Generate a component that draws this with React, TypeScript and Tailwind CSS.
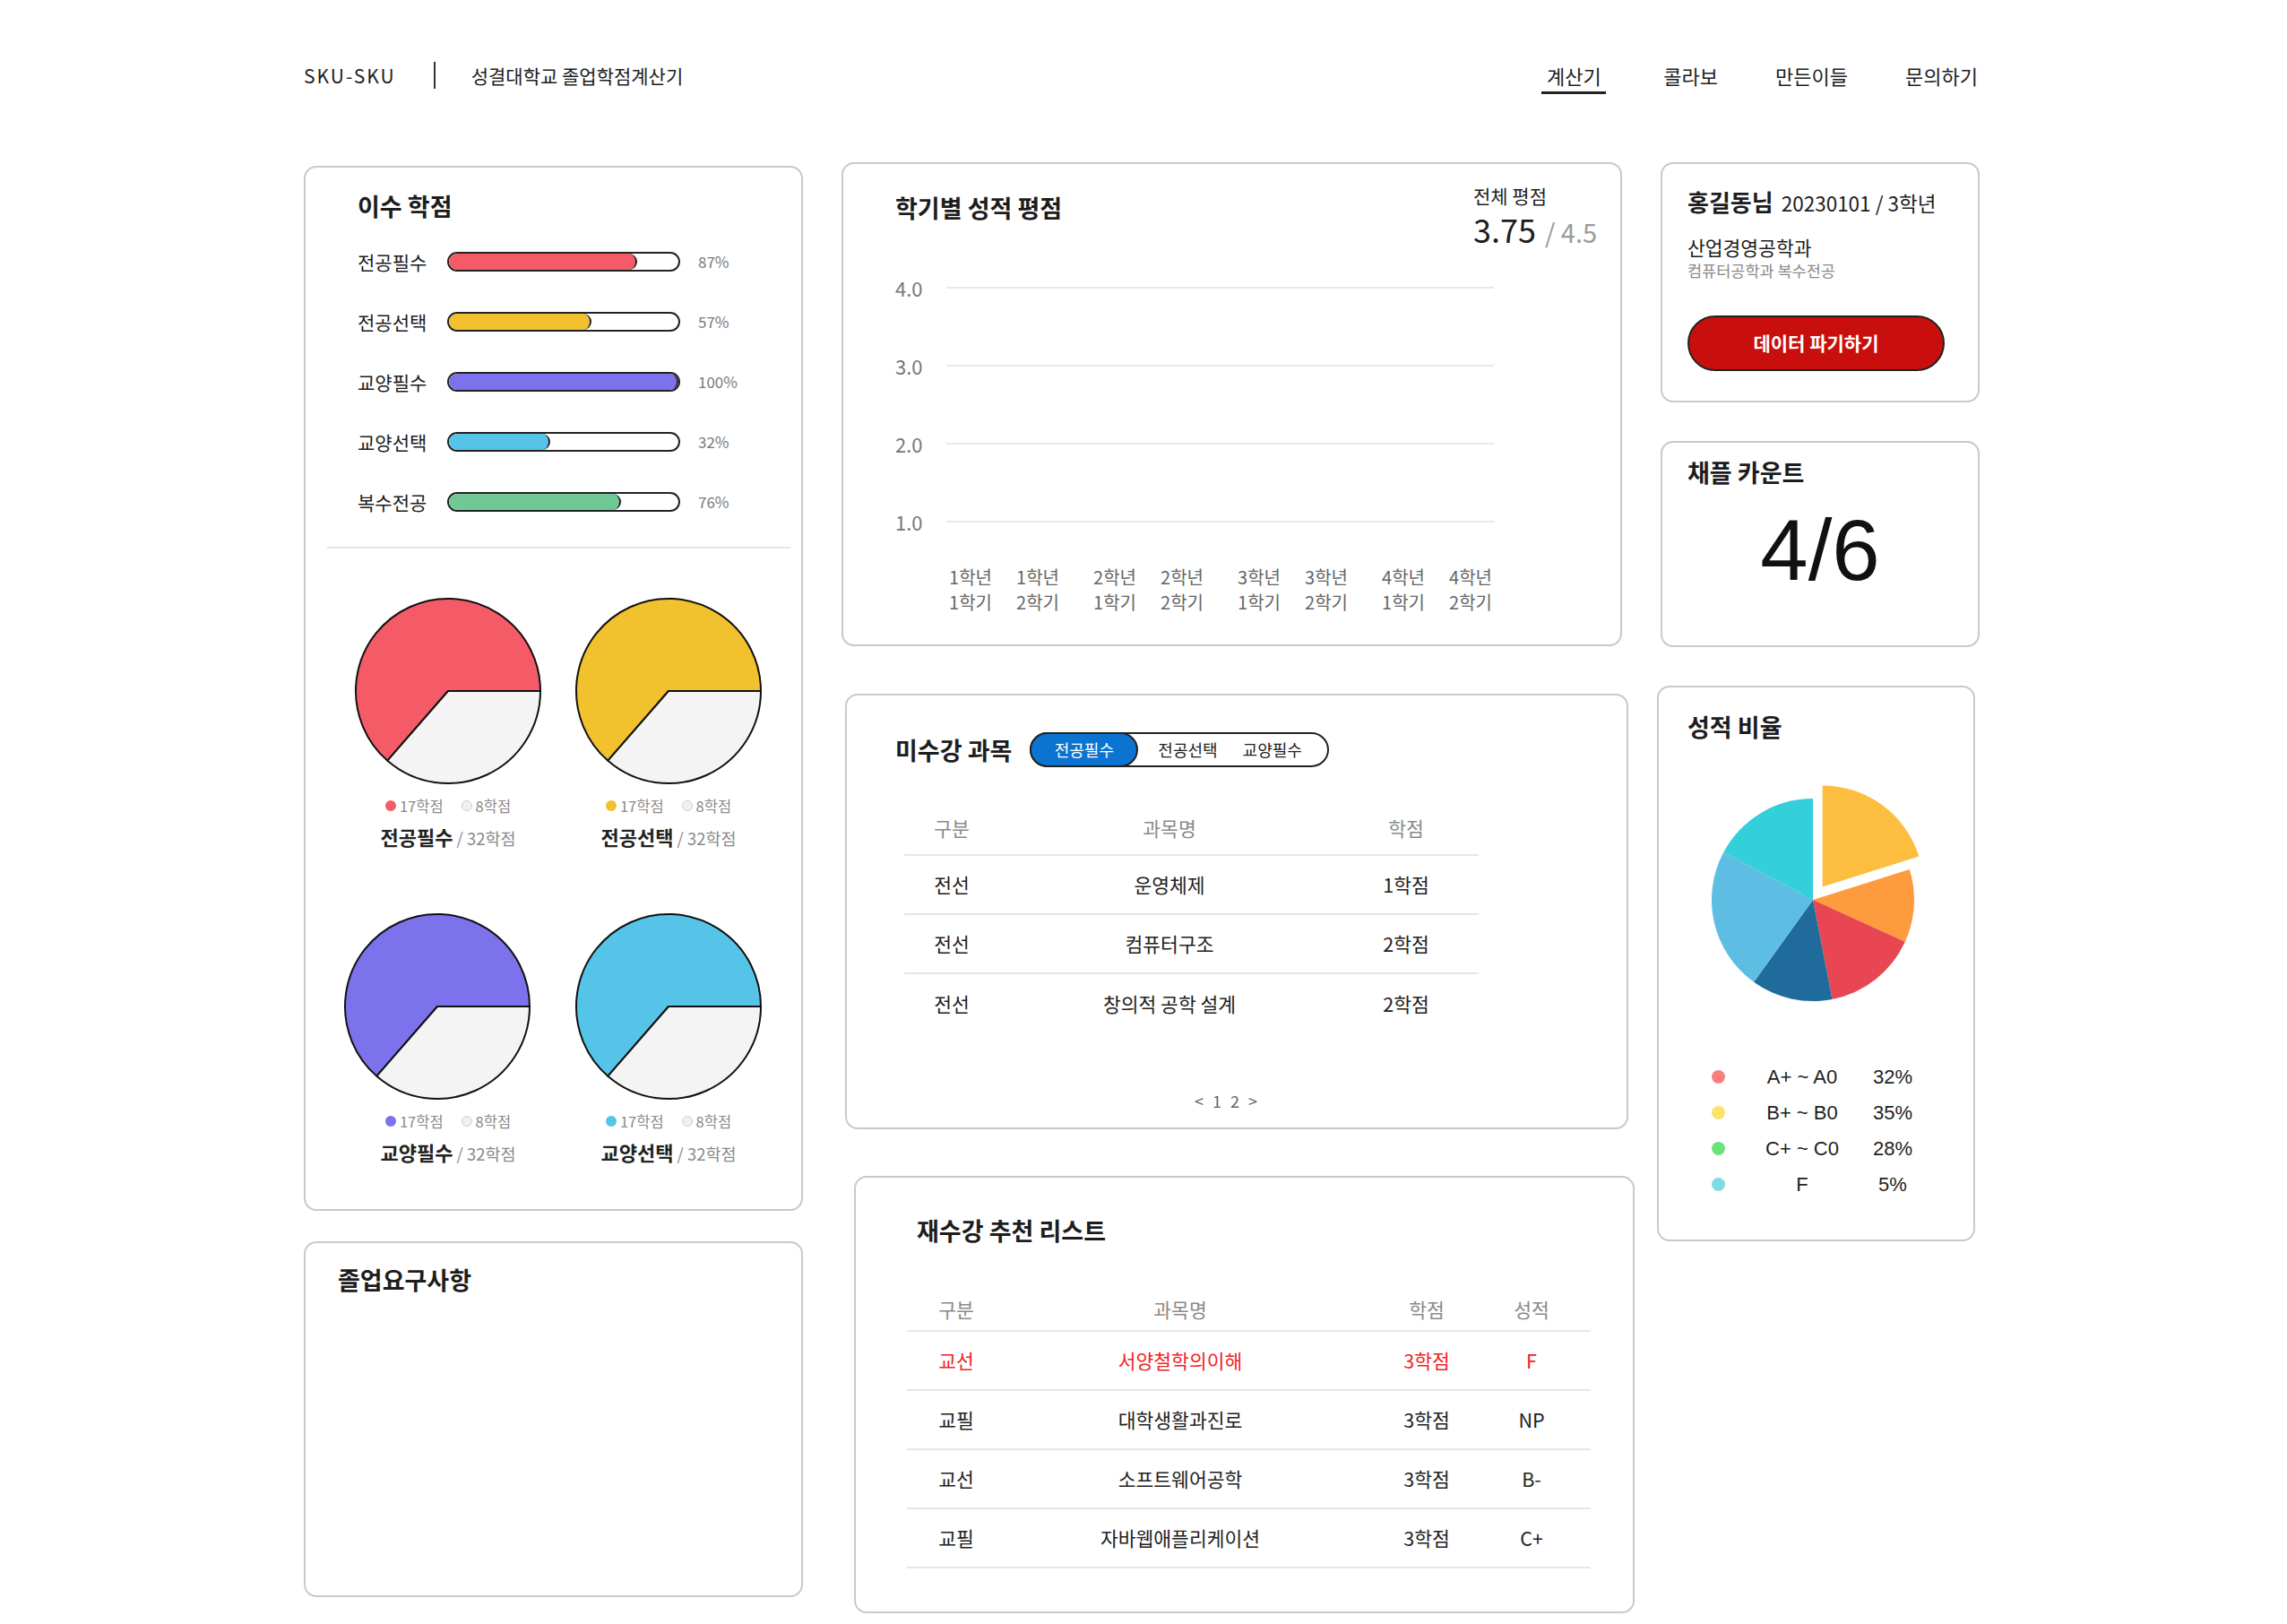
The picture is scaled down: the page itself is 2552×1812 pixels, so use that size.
import React from "react";

const bars = [
  { label: "전공필수", pct: "87%", w: 82, fill: "bg-[#F45B67]" },
  { label: "전공선택", pct: "57%", w: 62, fill: "bg-[#F2C12E]" },
  { label: "교양필수", pct: "100%", w: 100, fill: "bg-[#7B72EC]" },
  { label: "교양선택", pct: "32%", w: 44, fill: "bg-[#56C4E8]" },
  { label: "복수전공", pct: "76%", w: 75, fill: "bg-[#70C995]" },
];

function MiniPie({ color, className }: { color: string; className?: string }) {
  return (
    <svg width="210" height="210" viewBox="0 0 210 210" className={className}>
      <path
        d="M105,105 L37.4,182.7 A103,103 0 1,1 208,105 Z"
        fill={color}
        stroke="#111"
        strokeWidth="2"
        strokeLinejoin="round"
      />
      <path
        d="M105,105 L208,105 A103,103 0 0,1 37.4,182.7 Z"
        fill="#F4F4F4"
        stroke="#111"
        strokeWidth="2"
        strokeLinejoin="round"
      />
    </svg>
  );
}

function PieBlock({
  color,
  dot,
  name,
  pieClass,
}: {
  color: string;
  dot: string;
  name: string;
  pieClass?: string;
}) {
  return (
    <div className="flex w-[210px] flex-col items-center">
      <MiniPie color={color} className={pieClass} />
      <div className="mt-[12px] flex h-[22px] items-center whitespace-nowrap text-[16.5px] leading-[22px] text-[#8a8a8a]">
        <span className={`h-[12px] w-[12px] rounded-full ${dot}`} />
        <span className="ml-[4px]">17학점</span>
        <span className="ml-[20px] h-[12px] w-[12px] rounded-full border border-[#cfcfcf] bg-[#f0f0f0]" />
        <span className="ml-[4px]">8학점</span>
      </div>
      <div className="mt-[9px] whitespace-nowrap leading-[28px]">
        <span className="text-[22px] font-semibold text-[#222]">{name}</span>
        <span className="text-[18.5px] text-[#8a8a8a]"> / 32학점</span>
      </div>
    </div>
  );
}

function arcPath(cx: number, cy: number, r: number, a0: number, a1: number) {
  const rad = (d: number) => (d * Math.PI) / 180;
  const x0 = cx + r * Math.cos(rad(a0));
  const y0 = cy + r * Math.sin(rad(a0));
  const x1 = cx + r * Math.cos(rad(a1));
  const y1 = cy + r * Math.sin(rad(a1));
  const large = a1 - a0 > 180 ? 1 : 0;
  return `M${cx},${cy} L${x0.toFixed(2)},${y0.toFixed(2)} A${r},${r} 0 ${large},1 ${x1.toFixed(2)},${y1.toFixed(2)} Z`;
}

function GradePie() {
  const slices: [number, number, string, number, number][] = [
    [-17.5, 24.5, "#FD9B3E", 0, 0],
    [24.5, 79, "#E84653", 0, 0],
    [79, 125.7, "#1F6B9B", 0, 0],
    [125.7, 208, "#5DBDE2", 0, 0],
    [208, 270, "#33CFDB", 0, 0],
    [-90, -17.5, "#FDBE3F", 10.6, -14.5],
  ];
  return (
    <svg width="260" height="260" viewBox="0 0 260 260">
      {slices.map(([a0, a1, c, dx, dy], i) => (
        <path key={i} d={arcPath(130 + dx, 130 + dy, 113, a0, a1)} fill={c} />
      ))}
    </svg>
  );
}

const cardBase = "rounded-[14px] border-2 border-[#c6c9ce] bg-white";
const title = "text-[27px] font-bold leading-[34px] whitespace-nowrap";

export default function App() {
  return (
    <div className="min-h-screen w-full bg-white font-['Noto_Sans_CJK_KR',sans-serif] text-[#1d1d1d]">
      <div className="mx-auto w-[1874px] pb-[12px]">
        {/* Header */}
        <header className="flex items-start justify-between pt-[70px]">
          <div className="flex h-[28px] items-center">
            <span className="text-[21px] leading-[28px] tracking-[2px]">SKU-SKU</span>
            <span className="ml-[42px] h-[30px] w-[2px] bg-[#333]" />
            <span className="ml-[40px] text-[21px] leading-[28px]">성결대학교 졸업학점계산기</span>
          </div>
          <nav className="mr-[6px] flex gap-[64px]">
            <div className="flex flex-col items-center">
              <span className="text-[22px] leading-[28px]">계산기</span>
              <span className="mt-[4px] h-[3px] w-[72px] bg-[#222]" />
            </div>
            <span className="text-[22px] leading-[28px]">콜라보</span>
            <span className="text-[22px] leading-[28px]">만든이들</span>
            <span className="text-[22px] leading-[28px]">문의하기</span>
          </nav>
        </header>

        <main className="mt-[76px] flex items-start">
          {/* Column 1 */}
          <div className="mt-[4px] flex w-[557px] flex-col">
            <section className={`${cardBase} h-[1166px] pl-[58px] pt-[26px]`}>
              <h2 className={title}>이수 학점</h2>
              <div className="mt-[30px] flex flex-col gap-[37px]">
                {bars.map((b) => (
                  <div key={b.label} className="flex h-[30px] items-center">
                    <span className="w-[100px] whitespace-nowrap text-[21px] leading-[30px]">{b.label}</span>
                    <div className="flex h-[22px] w-[260px] overflow-hidden rounded-full border-2 border-[#222] bg-white">
                      <div
                        className={`h-full rounded-full border-r-2 border-[#222] ${b.fill}`}
                        style={{ width: `${b.w}%` }}
                      />
                    </div>
                    <span className="ml-[20px] text-[17px] text-[#7a7a7a]">{b.pct}</span>
                  </div>
                ))}
              </div>
              <div className="-ml-[34px] mt-[35px] h-[2px] w-[517px] bg-[#e6e6e6]" />
              <div className="-ml-[4px] mt-[54px] flex gap-[36px]">
                <PieBlock color="#F45B67" dot="bg-[#F45B67]" name="전공필수" />
                <PieBlock color="#F2C12E" dot="bg-[#F2C12E]" name="전공선택" />
              </div>
              <div className="-ml-[4px] mt-[68px] flex gap-[36px]">
                <PieBlock color="#7B72EC" dot="bg-[#7B72EC]" name="교양필수" pieClass="-ml-[24px]" />
                <PieBlock color="#56C4E8" dot="bg-[#56C4E8]" name="교양선택" />
              </div>
            </section>

            <section className={`${cardBase} mt-[34px] h-[397px] pl-[36px] pt-[24px]`}>
              <h2 className={title}>졸업요구사항</h2>
            </section>
          </div>

          {/* Column 2 */}
          <div className="ml-[43px] flex w-[886px] flex-col">
            <section className={`${cardBase} h-[540px] w-[871px] pl-[58px] pr-[24px] pt-[22px]`}>
              <div className="flex items-start justify-between">
                <h2 className={`mt-[10px] ${title}`}>학기별 성적 평점</h2>
                <div className="flex w-[140px] flex-col">
                  <span className="whitespace-nowrap text-[21px] leading-[26px]">전체 평점</span>
                  <div className="mt-[4px] flex items-baseline leading-[40px]">
                    <span className="text-[36px]">3.75</span>
                    <span className="ml-[10px] text-[29px] text-[#9a9a9a]">/ 4.5</span>
                  </div>
                </div>
              </div>
              <div className="mt-[28px] flex flex-col gap-[57px]">
                {["4.0", "3.0", "2.0", "1.0"].map((v) => (
                  <div key={v} className="flex h-[30px] items-center">
                    <span className="w-[57px] text-[22px] text-[#777]">{v}</span>
                    <span className="h-[2px] w-[611px] bg-[#e8e8e8]" />
                  </div>
                ))}
              </div>
              <div className="ml-[59px] mt-[33px] flex gap-[36px] text-[20px] leading-[28px] text-[#666]">
                {["1", "2", "3", "4"].map((y) => (
                  <div key={y} className="flex gap-[25px]">
                    <div className="flex w-[50px] flex-col items-center whitespace-nowrap">
                      <span>{y}학년</span>
                      <span>1학기</span>
                    </div>
                    <div className="flex w-[50px] flex-col items-center whitespace-nowrap">
                      <span>{y}학년</span>
                      <span>2학기</span>
                    </div>
                  </div>
                ))}
              </div>
            </section>

            <section className={`${cardBase} ml-[4px] mt-[53px] h-[486px] w-[874px] pl-[54px] pt-[41px]`}>
              <div className="flex h-[39px] items-center">
                <h2 className={title}>미수강 과목</h2>
                <div className="ml-[20px] flex h-[39px] w-[334px] items-center rounded-full border-2 border-[#222] text-[18px]">
                  <span className="-ml-[2px] flex h-[39px] w-[121px] items-center justify-center rounded-full border-2 border-[#222] bg-[#0B74D1] text-white">
                    전공필수
                  </span>
                  <span className="ml-[22px] text-[#222]">전공선택</span>
                  <span className="ml-[28px] text-[#222]">교양필수</span>
                </div>
              </div>
              <div className="ml-[10px] mt-[39px] w-[641px] text-[21.5px]">
                <div className="flex h-[60px] items-center border-b-2 border-[#e6e6e6] text-[#8a8a8a]">
                  <span className="w-[106px] text-center">구분</span>
                  <span className="w-[380px] text-center">과목명</span>
                  <span className="w-[148px] text-center">학점</span>
                </div>
                {[
                  ["전선", "운영체제", "1학점"],
                  ["전선", "컴퓨터구조", "2학점"],
                  ["전선", "창의적 공학 설계", "2학점"],
                ].map((r, i) => (
                  <div
                    key={i}
                    className={`flex h-[66px] items-center text-[#222] ${i < 2 ? "border-b-2 border-[#e6e6e6]" : ""}`}
                  >
                    <span className="w-[106px] text-center">{r[0]}</span>
                    <span className="w-[380px] text-center">{r[1]}</span>
                    <span className="w-[148px] text-center">{r[2]}</span>
                  </div>
                ))}
                <div className="mt-[63px] pl-[80px] text-center text-[18px] leading-[24px] tracking-[3px] text-[#666]">
                  &lt; 1 2 &gt;
                </div>
              </div>
            </section>

            <section className={`${cardBase} ml-[14px] mt-[52px] h-[488px] w-[871px] pl-[68px] pt-[42px]`}>
              <h2 className={title}>재수강 추천 리스트</h2>
              <div className="-ml-[11px] mt-[48px] w-[763px] text-[21.5px]">
                <div className="flex h-[48px] items-center border-b-2 border-[#e6e6e6] text-[#8a8a8a]">
                  <span className="w-[110px] text-center">구분</span>
                  <span className="w-[390px] text-center">과목명</span>
                  <span className="w-[160px] text-center">학점</span>
                  <span className="w-[74px] text-center">성적</span>
                </div>
                {[
                  ["교선", "서양철학의이해", "3학점", "F", true],
                  ["교필", "대학생활과진로", "3학점", "NP", false],
                  ["교선", "소프트웨어공학", "3학점", "B-", false],
                  ["교필", "자바웹애플리케이션", "3학점", "C+", false],
                ].map((r, i) => (
                  <div
                    key={i}
                    className={`flex h-[66px] items-center border-b-2 border-[#e6e6e6] ${r[4] ? "text-[#F02424]" : "text-[#222]"}`}
                  >
                    <span className="w-[110px] text-center">{r[0]}</span>
                    <span className="w-[390px] text-center">{r[1]}</span>
                    <span className="w-[160px] text-center">{r[2]}</span>
                    <span className="w-[74px] text-center">{r[3]}</span>
                  </div>
                ))}
              </div>
            </section>
          </div>

          {/* Column 3 */}
          <div className="ml-[22px] flex w-[362px] flex-col">
            <section className={`${cardBase} ml-[6px] h-[268px] w-[356px] pl-[28px] pt-[25px]`}>
              <div className="flex items-baseline whitespace-nowrap leading-[34px]">
                <span className="text-[26px] font-bold">홍길동님</span>
                <span className="ml-[9px] text-[22.5px]">20230101 / 3학년</span>
              </div>
              <div className="mt-[19px] text-[21.5px] leading-[28px]">산업경영공학과</div>
              <div className="mt-[0px] text-[17.5px] leading-[24px] text-[#8a8a8a]">컴퓨터공학과 복수전공</div>
              <button className="mt-[38px] flex h-[62px] w-[287px] items-center justify-center rounded-full border-2 border-[#222] bg-[#C90E0E] text-[21px] font-bold text-white">
                데이터 파기하기
              </button>
            </section>

            <section className={`${cardBase} ml-[6px] mt-[43px] h-[230px] w-[356px] pt-[16px]`}>
              <h2 className={`pl-[28px] ${title}`}>채플 카운트</h2>
              <div className="mt-[20px] text-center font-['Liberation_Sans',sans-serif] text-[96px] leading-[100px] text-[#111]">
                4/6
              </div>
            </section>

            <section className={`${cardBase} ml-[2px] mt-[43px] h-[620px] w-[355px] pl-[32px] pt-[27px]`}>
              <h2 className={title}>성적 비율</h2>
              <div className="ml-[10px] mt-[46px]">
                <GradePie />
              </div>
              <div className="ml-[27px] mt-[47px] flex flex-col font-['Liberation_Sans',sans-serif] text-[22px] text-[#222]">
                {[
                  ["bg-[#F98080]", "A+ ~ A0", "32%"],
                  ["bg-[#FCE36B]", "B+ ~ B0", "35%"],
                  ["bg-[#6DE27C]", "C+ ~ C0", "28%"],
                  ["bg-[#80DCE3]", "F", "5%"],
                ].map(([c, l, p]) => (
                  <div key={l} className="flex h-[40px] items-center">
                    <span className={`h-[15px] w-[15px] rounded-full ${c}`} />
                    <span className="ml-[36px] w-[100px] text-center">{l}</span>
                    <span className="ml-[21px] w-[60px] text-center">{p}</span>
                  </div>
                ))}
              </div>
            </section>
          </div>
        </main>
      </div>
    </div>
  );
}
